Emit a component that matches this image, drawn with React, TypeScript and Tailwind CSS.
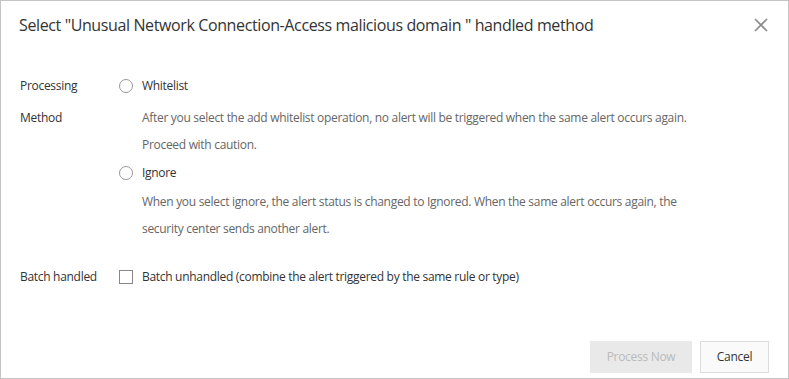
import React from "react";

export default function App() {
  const font = { fontFamily: '"Segoe UI", "Open Sans", sans-serif' };
  return (
    <div className="w-[789px] h-[379px] bg-white border border-[#c4c4c4] flex flex-col text-[#333]" style={font}>
      <div className="flex items-center justify-between pl-[18px] pr-[19px] h-[48px]">
        <div className="text-[16px] text-[#333] tracking-[-0.38px]">Select "Unusual Network Connection-Access malicious domain " handled method</div>
        <svg width="16" height="16" viewBox="0 0 16 16" className="text-[#888]">
          <path d="M2 2 L14 14 M14 2 L2 14" stroke="currentColor" strokeWidth="1.6" />
        </svg>
      </div>
      <div className="flex flex-col pl-[19px] pt-[25px] text-[12px] tracking-[-0.3px]">
        <div className="flex">
          <div className="w-[99px] shrink-0 flex flex-col">
            <div className="h-[24px] leading-[24px]">Processing</div>
            <div className="h-[40px] leading-[40px]">Method</div>
          </div>
          <div className="flex flex-col">
            <label className="flex items-center h-[24px]">
              <span className="w-[14px] h-[14px] rounded-full border border-[#999] bg-white mr-[9px]" />
              <span>Whitelist</span>
            </label>
            <div className="pl-[23px] text-[#666] leading-[27px] pt-[6px]">
              <div>After you select the add whitelist operation, no alert will be triggered when the same alert occurs again.</div>
              <div>Proceed with caution.</div>
            </div>
            <label className="flex items-center h-[30px]">
              <span className="w-[14px] h-[14px] rounded-full border border-[#999] bg-white mr-[9px]" />
              <span>Ignore</span>
            </label>
            <div className="pl-[23px] text-[#666] leading-[27px]">
              <div>When you select ignore, the alert status is changed to Ignored. When the same alert occurs again, the</div>
              <div>security center sends another alert.</div>
            </div>
          </div>
        </div>
        <div className="flex items-center mt-[23px] h-[24px]">
          <div className="w-[99px] shrink-0">Batch handled</div>
          <span className="w-[14px] h-[14px] border border-[#888] bg-white mr-[9px]" />
          <span>Batch unhandled (combine the alert triggered by the same rule or type)</span>
        </div>
      </div>
      <div className="mt-auto flex justify-end gap-[8px] pr-[19px] pb-[5px] tracking-[-0.3px]">
        <button className="w-[102px] h-[32px] bg-[#e9e9e9] text-[#bbb] text-[12px]">Process Now</button>
        <button className="w-[69px] h-[32px] bg-[#fafafa] border border-[#ddd] text-[#333] text-[12px]">Cancel</button>
      </div>
    </div>
  );
}
